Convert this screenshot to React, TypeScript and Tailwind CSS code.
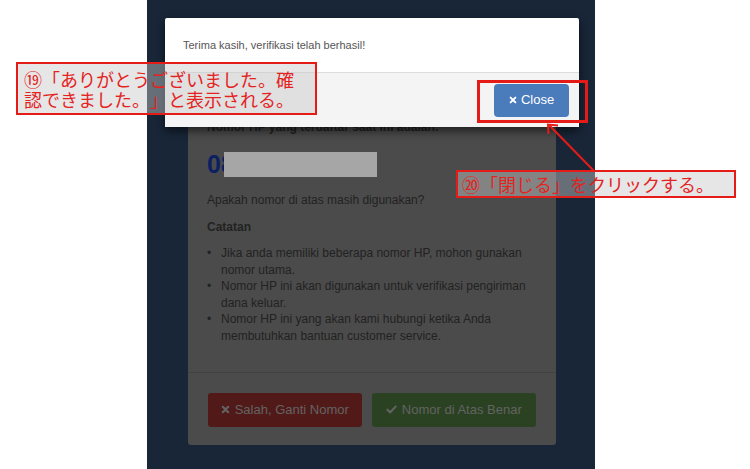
import React from "react";

const NOTES = [
  "Jika anda memiliki beberapa nomor HP, mohon gunakan nomor utama.",
  "Nomor HP ini akan digunakan untuk verifikasi pengiriman dana keluar.",
  "Nomor HP ini yang akan kami hubungi ketika Anda membutuhkan bantuan customer service.",
];

const TimesIcon = ({ className }: { className?: string }) => (
  <svg viewBox="0 0 10 10" className={className}>
    <path d="M2 2 L8 8 M8 2 L2 8" stroke="currentColor" strokeWidth="2.4" strokeLinecap="round" />
  </svg>
);

const CheckIcon = ({ className }: { className?: string }) => (
  <svg viewBox="0 0 12 10" className={className}>
    <path d="M1.5 5.2 L4.6 8.2 L10.5 1.8" fill="none" stroke="currentColor" strokeWidth="2.4" strokeLinecap="round" strokeLinejoin="round" />
  </svg>
);

const App: React.FC = () => {
  return (
    <div
      className="relative w-[750px] h-[469px] overflow-hidden bg-white flex"
      style={{ fontFamily: '"Liberation Sans", Arial, sans-serif' }}
    >
      {/* dimmed page behind the dialog */}
      <div className="ml-[147px] w-[448px] h-full bg-[#182638] pt-[100px] pl-[41px]">
        <div className="w-[368px] bg-[#4b4b4b] rounded-[3px] text-[#222]">
          <div className="px-[19px] pt-[19px] pb-[27px] border-b border-[#424242]">
            <p className="text-[12px] leading-[17px] font-bold">Nomor HP yang terdaftar saat ini adalah:</p>
            <div className="flex items-center h-[28px] mt-[14px]">
              <span className="text-[25px] font-bold text-[#0c1f63] leading-none">08</span>
              <span className="ml-[-11px] w-[153px] h-[25px] bg-[#a6a6a6]" />
            </div>
            <p className="text-[12px] leading-[17px] mt-[14px]">Apakah nomor di atas masih digunakan?</p>
            <p className="text-[12px] leading-[17px] font-bold mt-[10px]">Catatan</p>
            <ul className="mt-[9px] text-[12px] leading-[16.6px]">
              {NOTES.map((n) => (
                <li key={n} className="flex">
                  <span className="w-[14px] shrink-0">•</span>
                  <span>{n}</span>
                </li>
              ))}
            </ul>
          </div>
          <div className="flex gap-[10px] px-[20px] pt-[20px] pb-[18px]">
            <button className="w-[154px] h-[34px] rounded-[3px] bg-[#511a18] text-[#636363] text-[13px] flex items-center justify-center gap-[5px]">
              <TimesIcon className="w-[9px] h-[9px]" />
              Salah, Ganti Nomor
            </button>
            <button className="w-[165px] h-[34px] rounded-[3px] bg-[#2a4221] text-[#636363] text-[13px] flex items-center justify-center gap-[5px]">
              <CheckIcon className="w-[11px] h-[9px]" />
              Nomor di Atas Benar
            </button>
          </div>
        </div>
      </div>

      {/* success dialog */}
      <div className="absolute left-[165px] top-[18px] w-[414px] bg-white rounded-[2px] shadow-[0_4px_10px_rgba(0,0,0,0.6)]">
        <div className="h-[55px] flex items-center px-[18px] border-b border-[#dcdcdc]">
          <p className="text-[11px] text-[#555]">Terima kasih, verifikasi telah berhasil!</p>
        </div>
        <div className="h-[54px] bg-[#f4f4f4] flex items-center justify-end pr-[10px]">
          <button className="w-[75px] h-[33px] rounded-[4px] bg-[#4a7bba] text-white text-[13px] flex items-center justify-center gap-[4px]">
            <TimesIcon className="w-[8px] h-[8px]" />
            Close
          </button>
        </div>
      </div>

      {/* annotations */}
      <div
        className="absolute left-[16px] top-[62px] w-[301px] h-[53px] border-2 border-[#e41b17] bg-[rgba(200,200,200,0.45)] text-[#e3231f] text-[18px] leading-[20px] pl-[6px] pt-[5px] [text-spacing-trim:space-all]"
        style={{ fontFamily: '"Noto Sans CJK JP", sans-serif' }}
      >
        ⑲「ありがとうございました。確
        <br />
        認できました。」と表示される。
      </div>

      <div className="absolute left-[477px] top-[80px] w-[111px] h-[43px] border-[3px] border-[#e41b17]" />

      <div
        className="absolute left-[456px] top-[170px] w-[280px] h-[28px] border-2 border-[#e41b17] bg-[rgba(200,200,200,0.45)] text-[#e3231f] text-[18px] leading-[24px] pl-[4px] flex items-center [text-spacing-trim:space-all]"
        style={{ fontFamily: '"Noto Sans CJK JP", sans-serif' }}
      >
        ⑳「閉じる」をクリックする。
      </div>

      <svg className="absolute inset-0 pointer-events-none" width="750" height="469">
        <line x1="594" y1="171" x2="549" y2="125" stroke="#e41b17" strokeWidth="2" />
        <polyline points="548.5,134 548,124.5 558,125.5" fill="none" stroke="#e41b17" strokeWidth="2" />
      </svg>
    </div>
  );
};

export default App;
